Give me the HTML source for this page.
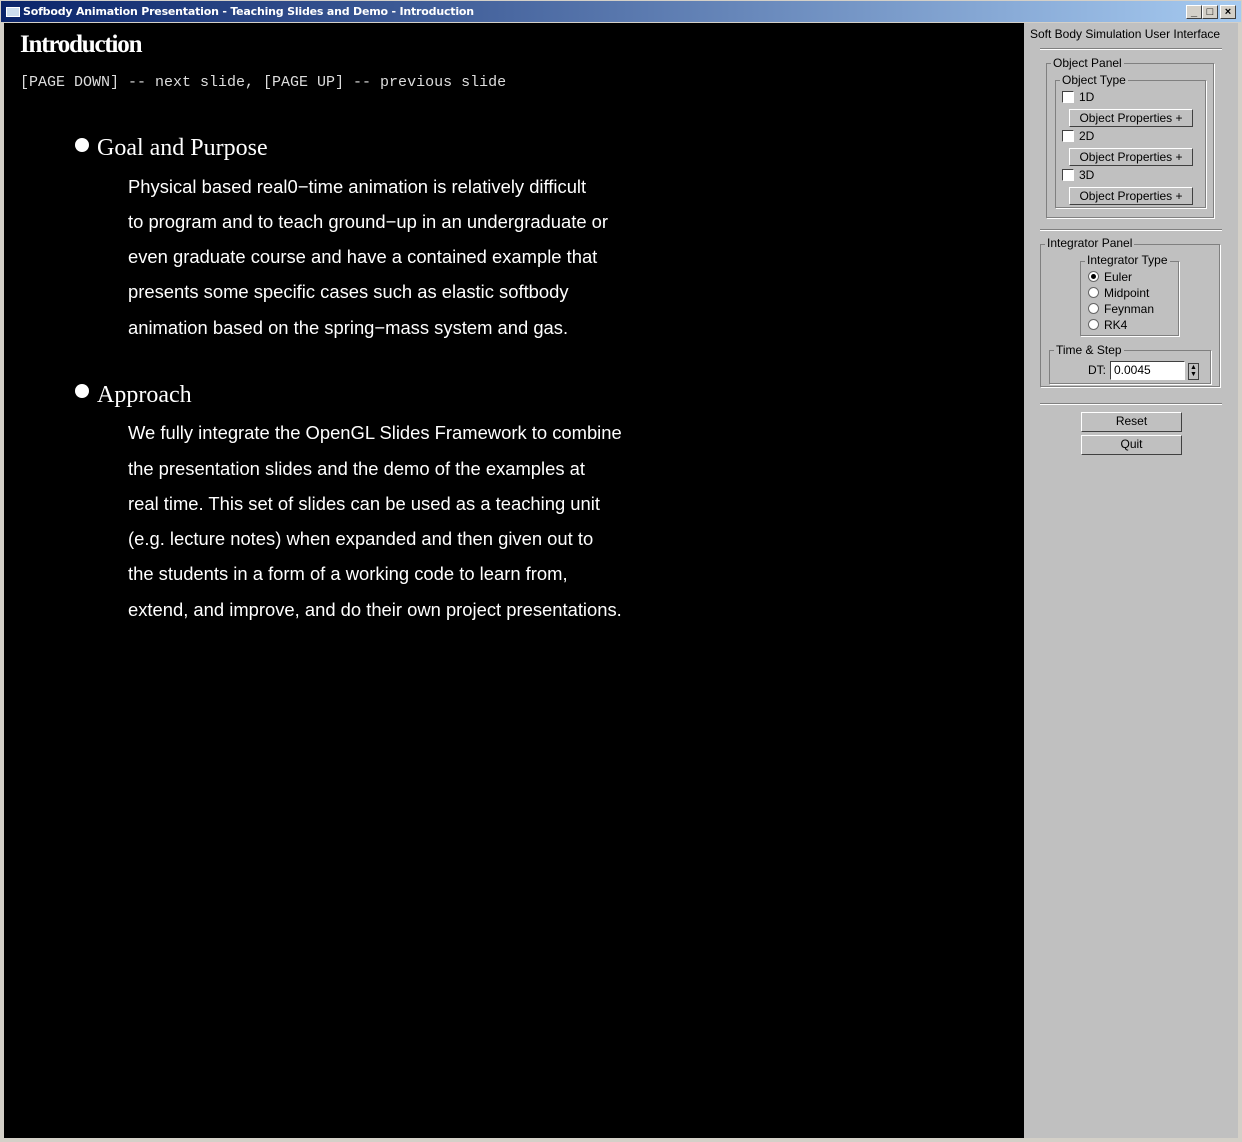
<!DOCTYPE html>
<html><head><style>
*{margin:0;padding:0;box-sizing:border-box}
body{width:1242px;height:1142px;background:#d4d0c8;position:relative;overflow:hidden;font-family:"Liberation Sans",sans-serif}
.title{position:absolute;left:0;top:0;width:1242px;height:23px;background:linear-gradient(90deg,#0a246a,#a6caf0);border:1px solid #d4d0c8}
.title span{position:absolute;left:22px;top:4px;color:#fff;font:bold 11px "DejaVu Sans",sans-serif;letter-spacing:-0.2px}
.ico{position:absolute;left:5px;top:6px;width:14px;height:10px;background:#cde;border:1px solid #fff}
.wb{position:absolute;top:4px;width:16px;height:14px;background:#d4d0c8;border:1px solid;border-color:#fff #404040 #404040 #fff;font:bold 11px sans-serif;text-align:center;line-height:12px;color:#000}
.black{position:absolute;left:4px;top:23px;width:1020px;height:1115px;background:#000;color:#fff}
.panel{position:absolute;left:1024px;top:23px;width:214px;height:1115px;background:#c0c0c0;font-size:12px;color:#000}
.a{position:absolute;white-space:nowrap}
.box{position:absolute;border:1px solid #808080;box-shadow:1px 1px 0 #fff}
.lbl{position:absolute;background:#c0c0c0;padding:0 2px;font-size:12px;line-height:13px}
.cb{position:absolute;width:12px;height:12px;background:#fff;border:1px solid;border-color:#404040 #fff #fff #404040}
.btn{position:absolute;background:#c0c0c0;border:1px solid;border-color:#fff #404040 #404040 #fff;text-align:center;font-size:12px;line-height:16px}
.rad{position:absolute;width:11px;height:11px;border-radius:50%;background:#fff;border:1px solid #666}
.body{font-size:18.4px;left:124px}
</style></head><body>
<div class="title"><div class="ico"></div><span>Sofbody Animation Presentation - Teaching Slides and Demo - Introduction</span>
<div class="wb" style="left:1185px">_</div><div class="wb" style="left:1201px">□</div><div class="wb" style="left:1219px">×</div></div>
<div class="black">
<div class="a" style="left:16px;top:8px;font:bold 25px 'Liberation Serif',serif;letter-spacing:-1.2px">Introduction</div>
<div class="a" style="left:16px;top:51px;font:15px 'Liberation Mono',monospace;color:#ddd">[PAGE DOWN] -- next slide, [PAGE UP] -- previous slide</div>
<div class="a" style="left:71px;top:115px;width:14px;height:14px;border-radius:50%;background:#fff"></div>
<div class="a" style="left:93px;top:112px;font:24px 'Liberation Serif',serif">Goal and Purpose</div>
<div class="a body" style="top:153px">Physical based real0−time animation is relatively difficult</div>
<div class="a body" style="top:188px">to program and to teach ground−up in an undergraduate or</div>
<div class="a body" style="top:223px">even graduate course and have a contained example that</div>
<div class="a body" style="top:258px">presents some specific cases such as elastic softbody</div>
<div class="a body" style="top:294px">animation based on the spring−mass system and gas.</div>
<div class="a" style="left:71px;top:361px;width:14px;height:14px;border-radius:50%;background:#fff"></div>
<div class="a" style="left:93px;top:359px;font:24px 'Liberation Serif',serif">Approach</div>
<div class="a body" style="top:399px">We fully integrate the OpenGL Slides Framework to combine</div>
<div class="a body" style="top:435px">the presentation slides and the demo of the examples at</div>
<div class="a body" style="top:470px">real time. This set of slides can be used as a teaching unit</div>
<div class="a body" style="top:505px">(e.g. lecture notes) when expanded and then given out to</div>
<div class="a body" style="top:540px">the students in a form of a working code to learn from,</div>
<div class="a body" style="top:576px">extend, and improve, and do their own project presentations.</div>
</div>
<div class="panel">
<div class="a" style="left:6px;top:4px">Soft Body Simulation User Interface</div>
<div class="a" style="left:16px;top:25px;width:182px;border-top:1px solid #808080;border-bottom:1px solid #fff"></div>
<div class="box" style="left:22px;top:40px;width:168px;height:155px"></div>
<div class="lbl" style="left:27px;top:34px">Object Panel</div>
<div class="box" style="left:31px;top:57px;width:151px;height:128px"></div>
<div class="lbl" style="left:36px;top:51px">Object Type</div>
<div class="cb" style="left:38px;top:68px"></div><div class="a" style="left:55px;top:67px">1D</div>
<div class="btn" style="left:45px;top:86px;width:124px">Object Properties +</div>
<div class="cb" style="left:38px;top:107px"></div><div class="a" style="left:55px;top:106px">2D</div>
<div class="btn" style="left:45px;top:125px;width:124px">Object Properties +</div>
<div class="cb" style="left:38px;top:146px"></div><div class="a" style="left:55px;top:145px">3D</div>
<div class="btn" style="left:45px;top:164px;width:124px">Object Properties +</div>
<div class="a" style="left:16px;top:206px;width:182px;border-top:1px solid #808080;border-bottom:1px solid #fff"></div>
<div class="box" style="left:16px;top:221px;width:180px;height:143px"></div>
<div class="lbl" style="left:21px;top:214px">Integrator Panel</div>
<div class="box" style="left:56px;top:238px;width:99px;height:75px"></div>
<div class="lbl" style="left:61px;top:231px">Integrator Type</div>
<div class="rad" style="left:64px;top:248px"><div style="width:5px;height:5px;background:#000;border-radius:50%;margin:2px"></div></div><div class="a" style="left:80px;top:247px">Euler</div>
<div class="rad" style="left:64px;top:264px"></div><div class="a" style="left:80px;top:263px">Midpoint</div>
<div class="rad" style="left:64px;top:280px"></div><div class="a" style="left:80px;top:279px">Feynman</div>
<div class="rad" style="left:64px;top:296px"></div><div class="a" style="left:80px;top:295px">RK4</div>
<div class="box" style="left:25px;top:327px;width:162px;height:34px"></div>
<div class="lbl" style="left:30px;top:321px">Time &amp; Step</div>
<div class="a" style="left:64px;top:340px">DT:</div>
<div class="a" style="left:86px;top:338px;width:75px;height:19px;background:#fff;border:1px solid;border-color:#404040 #fff #fff #404040;padding:1px 3px">0.0045</div>
<div class="a" style="left:164px;top:340px;width:11px;height:17px;background:#c0c0c0;border:1px solid #404040;font-size:7px;line-height:7px;text-align:center">▲<br>▼</div>
<div class="a" style="left:16px;top:380px;width:182px;border-top:1px solid #808080;border-bottom:1px solid #fff"></div>
<div class="btn" style="left:57px;top:389px;width:101px;height:20px">Reset</div>
<div class="btn" style="left:57px;top:412px;width:101px;height:20px">Quit</div>
</div>
</body></html>
